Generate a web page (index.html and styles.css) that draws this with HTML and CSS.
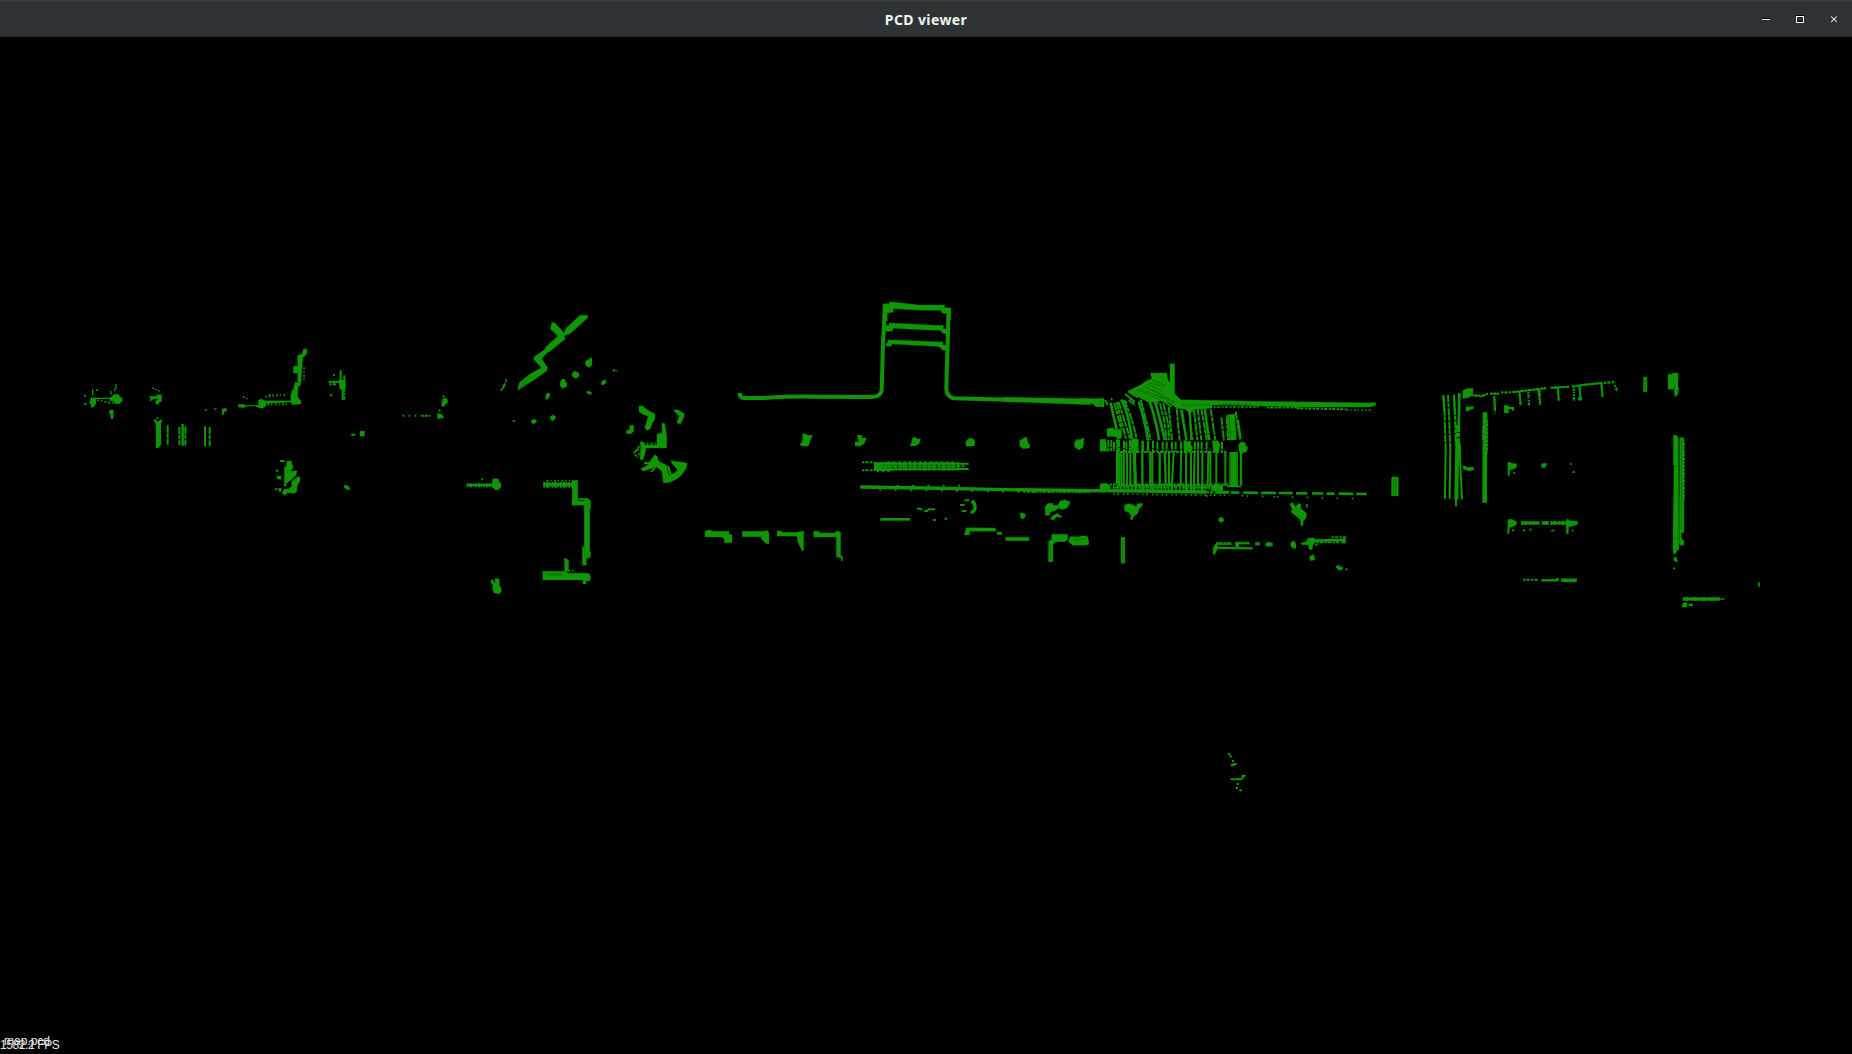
FILE: index.html
```html
<!DOCTYPE html>
<html lang="en">
<head>
<meta charset="utf-8">
<title>PCD viewer</title>
<link rel="stylesheet" href="styles.css">
</head>
<body>
<div class="window">
<header class="titlebar">
  <h1 class="title">PCD viewer</h1>
  <div class="controls">
    <svg width="10" height="10" viewBox="0 0 10 10"><path d="M1 4.5h8" stroke="#000"/><path d="M1 5.5h8" stroke="#fff"/></svg>
    <svg width="10" height="10" viewBox="0 0 10 10"><path d="M1 1.5h8M2 7.5h6" stroke="#000"/><path d="M1.5 2v6.500h7V2M1 2.500h8" fill="none" stroke="#fff"/></svg>
    <svg width="10" height="10" viewBox="0 0 10 10"><path d="M2 1.500L8 7.500M8 1.500L2 7.500" stroke="#111" stroke-width="1.200"/><path d="M2.200 2.300L7.800 7.900M7.800 2.300L2.200 7.900" stroke="#e4e4e2" stroke-width="1.200"/></svg>
  </div>
</header>
<main class="viewport">
<svg class="cloud" width="1852" height="1017" viewBox="0 37 1852 1017">
<!-- far left clusters -->
<g transform="translate(60 330) scale(.33333)">
  <path class="p" d="M92 203h16v18l-8 11h-7v-10h-4zM150 205l12-12h14l4 8 7 3v8l-8 9h-14l-5-8h-10zM149 240h11v26h-8v-14h-4zM268 199h22v-5h15v20l-6 2-4 7-8-2v-8l8-6-12-1-14 8v-6h4v-4h-5z"/>
  <path class="s4" d="M98 178v18M108 205h44M168 163v14M164 176v8M153 183v11M71 222h10"/>
  <path class="s5 dash" d="M72 197h6M108 180h8M112 210l18 4 24 6M145 218h24"/>
  <path class="s5 dash" d="M277 174l9 1 4 9 10-3M292 261v10M283 270l8 8M305 270l-8 7"/>
  <path class="p" d="M281 268h5l6 7 8-4h8l-5 8v65l-8 10h-7v-70z"/>
  <path class="s6 scan" d="M323 286v58M358 291v54M368 283v64M376 289v58M435 289v60M449 291v57"/>
  <path class="s6" d="M368 283v64M435 291v57"/>
  <path class="s5 dash" d="M435 240h8M463 237h6"/>
  <path class="p" d="M486 237l12-3 3 9-8 2-2 9h-5z"/>
  <path class="p" d="M534 231l2-8h16l4 3h39v-16l9-3 11 5h77v-18l8-14 5-24 10 4-2 40 10 14v8l-27 2-4-8-27 2-45 2-4 10-9 5-15-3-7-4-26 1-8 4z"/>
  <path class="p" d="M730 57h11v14l-13 13-2 30-4 52-9 5V130l-13-1v-20h13V76l13-4z"/>
  <path class="s5 dash" d="M548 200l18 8M626 195h52M616 200h25M732 112v38M600 223h84M698 180v20"/>
  <path class="s6" d="M842 121v55M853 136v34M848 165v45"/><path class="s6 dense" d="M806 156h48M808 163h20M820 135h5M810 196h10M853 165v45"/><path class="s5" d="M810 155h46"/>
  <path class="p" d="M836 150h20v28h-16z"/>
  <path class="s6" d="M874 314h12M660 393h14"/><path class="p" d="M900 303h14v13l-4 3h-10zM852 466h8l9 6v8l-9-2-8-6z"/>
  <path class="p" d="M680 393h15v10l5 7-8 14 20-2-6 16-16 14-12 10-5-2V410h6zM713 440h7v14l-8 12-2 20-9 4-18-2-8 8-9-6 6-12 14-2 10-8-2-12z"/>
  <path class="s6 dense" d="M648 422h8M645 478h20M660 485v-10M672 465h8"/>
  <path class="p" d="M649 438h14v10h-10z"/>
</g>
<!-- diagonal wall, corner room and pillar cluster -->
<g transform="translate(380 300) scale(.33333)">
  <path class="p" d="M600 46H623V54L570 101 552 107 556 117 545 125 515 150 500 160 485 176 503 203 500 213 465 238 413 271 418 248 450 222 484 203 461 178 463 170 495 148 498 140 534 108 512 88 515 67 524 68 540 85 552 99 558 85Z"/>
  <path class="k" d="M424 252l30-20M420 262l24-14"/>
  <path class="s5" d="M378 238v8M376 250l-5 12-9 10M368 258l8-5"/>
  <path class="p" d="M617 183l9-5 7-4 3 6v15l-9 8-11-8zM576 219l9-6 12 7v9l-10 7-11-7zM541 245l5-7h9l1 7 5 4v9l-11 8-10-8zM497 285l5-6 8 1-1 10-8 9-4-3zM664 247l6-7 8 1v8l-8 6-7-2zM619 275l9-2 7 5-2 6-13-5zM454 361l10-4 7 6-7 8-10-2zM510 350l8-5 9 4-2 9-9 6-4-8zM188 296l13-1 3 12-9 7-3 6-8-3 2-12zM172 340l10 1 8 6v7l-18 2z"/>
  <path class="s5 dense" d="M698 213l6-3 6 4M629 176h8M398 363h9M191 286v8M179 328v8"/>
  <path class="s6" stroke-dasharray="5 13" d="M68 347h56"/><path class="s6 dense" d="M124 347h28"/>
  <path class="p" d="M777 318l10-1 17 14 21 11v15l-8 12-6 18-9 4-8-6 6-20 4-16-16-6-11-8zM880 329l15 1 18 11v8l-11 22h-8l-3-5 7-18-9-8zM749 376h12v17l-7 8h-15v-9l10-4zM845 370h9l6 36v38h-62l-4 20-5 16-9-2 2-40-2-10 5-6 8 12h38v-32l16-4z"/>
  <path class="s5 dash" d="M790 430h52"/><path class="s5 dense" d="M778 438l-12 18M776 446l-14 13 8 12M778 460l-6 12"/>
  <path class="p" d="M824 464l8 5 4 15 17 8 7 5 7 29 16-7 10-9-8-10-10-10-1-9 8 3 22 2 18 4-3 15-11 16-14 14-24 12-20 2-4-34-12-12-10-3-12 6-22 8-8-8 19-9z"/>
  <path class="s6" d="M822 490l-23 16M832 492l-18 24M864 498l8 26M792 490l24-2"/>
  <!-- room outline -->
  <path class="s11 rough" d="M260 556h80"/><path class="s6" d="M262 555h80"/><path class="s5 dash" d="M303 538h8"/>
  <path class="p" d="M338 536h18v8l7 6v12l-9 8h-8l-10-10z"/>
  <path class="s13 rough" d="M490 554h90"/><path class="s9" d="M490 554h90"/>
  <path class="s4 dash" d="M500 542h80"/>
  <path class="s17" d="M585 541v68M621 598v173"/>
  <path class="p" d="M576 602h48v14h-48zM595 595h30v5h-30zM624 602h8v24h-8zM607 740h7v30h17v-8l-4 8-8 6v20h-12zM624 756h8v14l-8 6zM553 774l8 3 5 5v32h-12zM488 814h68l10 6h60l6 10-2 12-12 2v8h-9v-12H488z"/>
  <path class="k" d="M500 821h50M510 826h38M575 817h40M598 601h18"/>
  <path class="s5 dash" d="M565 812h20"/>
  <path class="p" d="M333 840h8v8h4v-12h13v20l6 10v10l-8 6-13-3-6-11 2-12-6-8z"/>
</g>
<!-- central corridor -->
<g transform="translate(690 290) scale(.33333)">
  <path class="s12" d="M149 309q0 15 13 15h60q80-5 140-4l180 1q30 1 33-20l4-139 6-120"/>
  <path class="s12" d="M776 54l-7 240q-1 24 22 31l110 3 299 6"/>
  <path class="p" d="M940 322l262 4v18l-262-9zM579 41h19v-6l30 3 60 7h76v8h18v38l-8 5-1-25-15-1-6-9H690l-80-5v11l-18 2v25h-12zM587 106h10v-7l20 1 120 6h23v10h12l-4 15-11-2-6-8h-21l-120-6-4 9h-19zM588 159h5v-9h22l120 5h23v10h11v16l-12-1-8-9-15-2-129-7v7h-17z"/>
  <path class="p" d="M338 430l10 3 6 3h14l-8 18-5 14-12 1-13-3 8-16zM501 435l15 1v8h14l-8 17-12 8-15-2v-12h12zM666 446l10-6 5 7 11-1-5 15-12 7-15-1 5-10zM827 455l7-8 6-3 12 4 3 10-2 10-24 1-2-8zM989 452l14-9 8-1 2 14 7 10-2 8-18 2-11-8zM1153 458l8-10 10 1 10-7v18l-2 12-12 8-13-8z"/>
  <path class="s6 dense" d="M516 517h36M516 541h36"/><path class="s6" d="M552 521h284M552 537h284"/>
  <path d="M552 529h255" stroke-width="25" stroke-dasharray="12 5 9 3"/><path d="M552 530h55" stroke-width="25"/><path class="s6 dense" d="M552 529h275"/>
  <path class="s4" stroke-dasharray="7 9" d="M560 544h50M592 516h200"/>
  <path class="k" d="M572 526h230M576 534h220"/>
  <path class="s10" d="M511 591l190 3 250 5 250 3"/><path class="s5" stroke-dasharray="6 40" d="M568 600l200 2 150 3 282 3M620 587h200"/><path class="s4 dense" d="M1000 606h200"/>
  <path class="s8" d="M571 688h89"/><path class="s6" d="M681 656h9l7 4M703 663h8l6-5h18M729 690h8M764 686h7M824 631h14M810 645h14M815 663h14"/>
  <path class="s10" d="M845 633q13 7 9 26-4 9-12 7"/>
  <path class="p" d="M990 669h7l9 3v9l-8 6-6-4zM1065 650l9-10h15v6h14l7-13 14-4 15 6v7l-8 12-14 5-10-4-13 7-12 4-4 9-12 2zM1080 688l10-12 12-6 12 8v5l-14-3-8 9z"/>
  <path class="p" d="M45 724l13-5 10 5h49v9h9v25h-23v-10l-8-7H45zM157 724h65l10-3 5 8v32h-8l-13-12-3-9h-56zM261 722l14 1v4h44l22-4v59h-5l-12-25-3-18-60-1zM371 723l17 1v5h47l4-6 13 3v70l6 4v12h-5v-9l-14-2v-60h-68z"/>
  <path class="p" d="M829 713l88 1v10h-78v11h-16l2-8zM920 726h15v8h-12zM946 742h71v10h-69zM1076 753l9-4v-16h48v16l-8 6h-28l-8 8v52h-14zM1140 740h54l2 18-10 8h-38l-12-11z"/>
  <path class="k" d="M1152 745h34M1150 751h36M1081 765v45"/>
</g>
<!-- scanned lines, centre right -->
<g transform="translate(1080 350) scale(.33333)">
  <path class="p" d="M0 146h42l30-1v26l-24-1-10-9-38-4z"/>
  <path class="p" d="M211 69H260L264 91 270 97V41H284V131L302 149 344 150 520 154 700 156 887 159V166L870 171H660L460 166 396 165V175L345 178 330 190 315 178 290 175 270 160 250 152 225 155 205 157 165 136 145 122 180 106 200 92 215 86Z"/>
  <path class="k" d="M190 110q40 15 70 35l25 12M200 103q35 10 60 30M170 120q50 15 98 46M215 90l40 15M205 98l48 12M225 135l60 26M306 165h86M420 163h90M63 150v20M180 116l70 28M220 120l50 30"/>
  <path class="s6" d="M135 132l30 24M145 124l28 18M122 150l20 8M200 142l35 18M245 150l30 20M75 150l8 14"/>
  <path class="s5 dense" d="M400 171h136M560 173h100M92 145l8 6"/><path class="s6 dense" d="M650 175l150 3"/><path class="s5 dash" d="M800 180h72"/>
  <!-- upper fan -->
  <path class="s8" d="M92 158q8 40 18 79M124 150q20 32 32 118M176 155q16 45 28 115M209 155q18 50 28 115M225 155q12 40 30 115"/>
  <path class="s6 scan" d="M102 158q12 40 22 80M110 156q12 50 28 110M132 152q20 35 38 114M146 150l20 16M182 150q14 50 30 120M240 160l12 48 8 62M250 160l14 60 4 50M266 170l10 100M290 175l9 97M306 180l14 90M328 180l9 90M342 180l10 90M353 175l11 95M364 175l16 95M375 175l14 95M392 178l14 92M424 202l8 70M440 200l4 70M467 185l13 83M116 156q16 50 34 110"/>
  <path class="s6" d="M303 180l16 90M328 182l6 88M374 178l12 92M474 210l8 56"/>
  <path d="M452 193l6 77" stroke-width="24"/><path class="k" d="M447 200l5 68M436 246h34"/>
  <!-- middle band -->
  <path class="p" d="M81 236l20-3v5h24v27l-10 2-9-7-25-1zM60 268h17l4 35H60z"/>
  <path class="s6 scan" d="M85 270v34M94 270v34M102 275v28M117 270v36M132 272v34M139 275v32M150 270v34M173 268v36M188 272v34M204 272v34M219 272v34M232 275v30M248 275v30M260 275v30M276 275v30M287 275v30M303 275v30M316 270v38M345 275v30M354 275v30M365 275v30M380 275v30M426 275v30"/>
  <path class="s7" d="M112 268v38M188 272v34M204 272v32"/>
  <path class="p" d="M150 278l8-12h12l4 14-4 24-15 3zM311 274h22v10l5 8-2 12-24 3zM396 272h16l8 8-2 22-17 4zM476 282l8-7 12 3 1 9 6 4-2 13-15 6-10-6z"/>
  <path class="s6 dense" d="M60 301h20M110 306h330"/>
  <!-- lower band -->
  <path d="M117 308v94" stroke-width="18"/><path d="M461 306v103" stroke-width="26"/>
  <path class="k" d="M450 310v96M471 308v96M121 310v90"/>
  <path class="s9" d="M163 305l3 100"/>
  <path class="s7" d="M131 306v100M187 306v115M211 306v98M239 306v100M255 306l2 100M483 306v100"/>
  <path class="s6" d="M141 308v100M151 306v100M217 306v116M267 306v100M281 306l-6 114M303 306l-1 100M318 306v118M333 306v116M344 306l-3 116M354 306v100M367 306v118M385 306l-2 100M391 306v100M409 306v100M436 308v100"/>
  <path class="s5 dense" d="M65 403h380M104 413h320"/><path class="s5" d="M110 407h320M440 409h44"/>
  <path class="p" d="M60 402l18-2 10 5v15H60zM394 405h35v18h-35z"/>
  <path stroke-dasharray="4 7" d="M88 412h310" stroke-width="14"/>
  <path class="s10" d="M0 422l200 1 180 3"/><path class="s7 dense" d="M380 427h80"/><path class="s8" stroke-dasharray="34 10 24 12 44 9 45 8 42 10 34 14" d="M410 427l450 5"/>
  <path class="s5" stroke-dasharray="4 8 5 12" d="M100 432l350 4"/><path class="s5" stroke-dasharray="5 40" d="M500 438l330 8M485 437h20M380 435v8M580 441h20"/>
  <!-- lower fragments -->
  <path class="p" d="M133 466l12-5 14 3 9 6 4-8 15-3v8l-10 10-4 14-12 8-4 11-6-3 2-10-8-11-11-2zM416 504l8-3 7 5v7l-7 5-8-5zM629 461l10-3 7 12 10-10 8 4-2 10 12 11 6 5-2 14-8 8-1 15h-6l-2-18-10-9-8-6-10-8 4-8zM678 463h5v9h-5z"/>
  <path class="p" d="M0 558h19v8l8 8-2 10H0zM123 562h12v78h-12zM936 381h17v56h-17z"/><path class="k" d="M2 567h14M129 570v64M940 388v45M946 390v40"/>
  <path class="s8 rough" d="M408 580h48M466 579h44"/><path class="s5" d="M408 582h46M470 580h38"/>
  <path class="p" d="M405 583h8v7l105 2v6l-106-1-7 16h-6v-18zM466 577h11v14h-11zM526 577h13v9h-13zM555 582l9-6 14 3v9l-18 2zM633 576l9-3 6 8v14h-10l-6-8zM662 579l16-3 6-11 18-2 2 5 85-2v-2h8v16h-12v-6l-80 2-6 10-3 14-9-3-2-12-19-1z"/>
  <path class="s5 dense" d="M755 561h48M710 577h70M705 584h12M796 658h7"/><path class="p" d="M690 617h6l3-5 5 9v9l-12 2-4-8zM767 651l8-7 5 6 8 1v7l-10 4z"/>
</g>
<!-- right section -->
<g transform="translate(1370 360) scale(.33333)">
  <path class="p" d="M0 128h17l-6 10H0zM65 351h20v56H64zM278 92l11-6 20-1v14l-10 13-20 4z"/><path class="k" d="M71 358v44M78 356v44"/>
  <path class="s6 scan" d="M220 105l4 55 2 94M234 105l4 80 2 70M252 103l4 90 1 60"/><path class="s8" d="M268 99l-2 105"/><path class="s12 scan" d="M264 195v60"/>
  <path class="s6" d="M227 254l-2 162M241 254l-2 162M269 250l2 70 5 98M220 108l3 45M252 105l3 60"/><path class="s12" d="M262 252l-3 166"/><path class="s6" d="M258 410v28"/>
  <path class="s14" d="M345 157l-1 271"/><path class="s4 dense" d="M338 200v40M352 180v100"/>
  <path class="s7 dense" d="M302 105l34 3 18-7M360 101h28M393 97h30l105-13M542 83l58-3M606 79l68-8 62-5"/><path class="s4" d="M302 106l34 2 16-6M362 101h25M430 96l98-11M545 84l52-4M635 75l60-6"/>
  <path class="s7 rough" d="M373 108l2 52M448 93l4 44M475 95l2 44M505 90l6 45M564 82l2 40M612 78v44M628 74l4 50M694 69l4 43M734 76l9 18"/>
  <path class="s5" d="M373 112l2 40M448 93l4 40M506 90l5 40M564 82l2 36M694 69l3 40M628 74l3 45"/><path class="p" d="M624 112h12v9h-12zM505 92h7v15h-7z"/>
  <path class="p" d="M288 140h13l10-1-2 8-10 2-2 4h-9zM402 136h14v5h16v11h-6v-5h-10v12h-14zM279 318h8l3 4 21-1v9l-14 3-18-7zM413 307h8l4 3 15 1v11l-8 5-12 3-2 17h-4zM514 311l17-1-3 9-4 4h-9z"/>
  <path class="s5" d="M600 312h6M607 336h8M429 339h6"/>
  <path class="p" d="M820 51h11v44h-11zM894 43h13v-4h17v62l-5 8h-5l-2-24-4 3h-14zM910 226h9l6 6 2 335-8 8-1 6h-9V515l3-200h-2zM929 233h13v285h-8l1 18 7 6v12l-8 3-6-6z"/>
  <path class="k" d="M825 56v34M911 50l3 35M913 317h9M910 536h14M935 238l-1 270"/><path class="s4 dash" d="M943 250v170M925 84v12"/>
  <path class="p" d="M911 592h9l3 13h-7l-5-5z"/><path class="s5" d="M909 625h6M1167 667v13"/>
  <path class="p" d="M414 478h12l14 7v9l-10 5-11 4-2 18h-5z"/><path class="s11 rough" d="M454 489h54M515 489h22M541 489h82"/><path class="s8" d="M454 489h54M518 489h18M545 489h77"/>
  <path class="p" d="M588 484l4-8 8 6 22 1v10l-16 6-10 2-1 20h-6z"/><path class="s5 dense" d="M426 511h8M459 511h7M478 509h8M544 513l12-3M606 512h5"/>
  <path class="s6 dense" d="M459 659h46"/><path class="s7" d="M514 661h50"/><path class="s11 rough" d="M574 661h49"/><path class="s8" d="M577 661h42M558 658h8"/>
  <path class="s11 rough" d="M939 717h110"/><path class="s8" d="M939 717h110"/><path class="s4" d="M1040 717h24"/><path class="p" d="M938 730l12-4 2 8-3 8h-13zM955 733l13-3v9l-12-2z"/>
</g>
<!-- outlier points -->
<g transform="translate(1200 740) scale(.33333)">
  <path class="s6" d="M84 42h6M88 49h7M96 63h6M92 76h8l6-5M98 72h12M92 118h30l6-4 3-8M124 107h13M110 132h7M107 144h7M118 151h8"/>
</g>
</svg>
<div class="overlay file">map.pcd</div>
<div class="overlay fps">1582.2 FPS</div>
</main>
</div>
</body>
</html>
```
FILE: styles.css
```css
body {
  margin: 0;
  background: #000;
}

.window {
  display: flex;
  flex-direction: column;
  width: 1852px;
  height: 1054px;
  overflow: hidden;
}

.titlebar {
  display: grid;
  grid-template-columns: 1fr auto 1fr;
  align-items: center;
  box-sizing: border-box;
  height: 37px;
  border-top: 2px solid #3c3b37;
  border-bottom: 1px solid #1f2426;
  background: #2d3235;
  color: #f2f2f0;
}

.title {
  grid-column: 2;
  margin: 0;
  padding-top: 1px;
  font: 700 14px/20px "Noto Sans", "Open Sans", sans-serif;
  letter-spacing: 0.4px;
}

.controls {
  display: flex;
  justify-content: flex-end;
  gap: 24px;
  padding-right: 13px;
}

.viewport {
  position: relative;
  flex: 1;
  background: #000;
}

.cloud {
  display: block;
  fill: none;
  stroke: #109604;
}

.cloud .p { fill: #109604; stroke: #0e8404; stroke-width: 1; }
.cloud .k { stroke: #064402; stroke-width: 2; stroke-dasharray: 5 3; }
.cloud .s4 { stroke-width: 4; }
.cloud .s5 { stroke-width: 5; }
.cloud .s6 { stroke-width: 6; }
.cloud .s7 { stroke-width: 7; }
.cloud .s8 { stroke-width: 8; }
.cloud .s9 { stroke-width: 10; }
.cloud .s10 { stroke-width: 10; }
.cloud .s11 { stroke-width: 12; }
.cloud .s12 { stroke-width: 12; }
.cloud .s13 { stroke-width: 18; }
.cloud .s14 { stroke-width: 14; }
.cloud .s17 { stroke-width: 17; }
.cloud .dash { stroke-dasharray: 6 5 4 7; }
.cloud .dense { stroke-dasharray: 7 3 10 4; }
.cloud .rough { stroke-dasharray: 5 3 8 2 3 4; }
.cloud .scan { stroke-dasharray: 22 2 13 3; }

.overlay {
  position: absolute;
  left: 0;
  color: #e8e8e8;
  font: 12px/12px "Liberation Sans", Arial, sans-serif;
  white-space: pre;
}

.file { left: 4px; bottom: 7px; }
.fps { bottom: 3px; letter-spacing: -0.4px; }
```
